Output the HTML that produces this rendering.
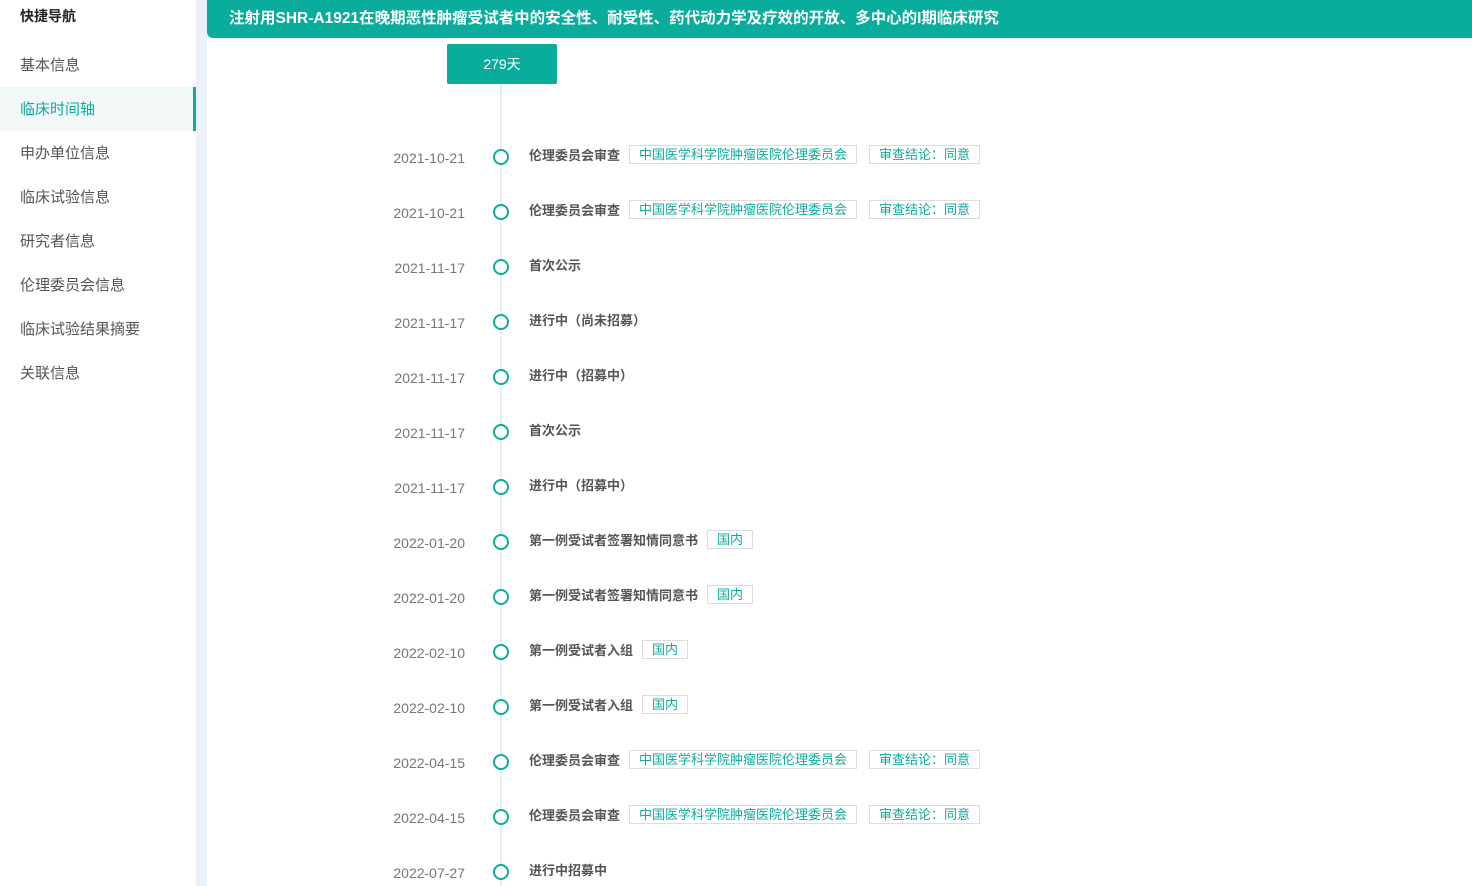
<!DOCTYPE html>
<html><head><meta charset="utf-8"><style>
*{margin:0;padding:0;box-sizing:border-box}
body{width:1472px;height:886px;overflow:hidden;background:#fff;font-family:"Liberation Sans","Noto Sans CJK SC",sans-serif;position:relative}
.side{position:absolute;left:0;top:0;width:196px;height:886px;background:#fff}
.gap{position:absolute;left:196px;top:0;width:11px;height:886px;background:#ebf1f8}
.side .h{position:absolute;left:20px;top:6px;font-size:14px;font-weight:bold;color:#222}
.side .it{position:absolute;left:0;width:196px;height:44px;line-height:45px;padding-left:20px;font-size:15px;color:#555}
.side .act{background:#f2f8f8;color:#0aac9c;border-right:3px solid #0aac9c}
.hdr{position:absolute;left:207px;top:0;width:1265px;height:38px;background:#0aac9c;border-radius:0 0 0 6px;color:#fff;font-weight:bold;font-size:15.5px;line-height:37px;padding-left:22px;white-space:nowrap}
.days{position:absolute;left:447px;top:44px;width:110px;height:40px;background:#0aac9c;color:#fff;font-size:14px;text-align:center;line-height:40px;border-radius:2px}
.line{position:absolute;left:500px;top:84px;width:2px;height:802px;background:#e8edf3}
.row{position:absolute;left:0;height:20px;width:1472px}
.d{position:absolute;right:1007px;top:3px;font-size:14px;color:#777}
.c{position:absolute;left:493px;top:2px;width:16px;height:16px;border:2.5px solid #0aac9c;border-radius:50%;background:#fff}
.t{position:absolute;left:529px;top:-2px;font-size:13px;font-weight:bold;color:#555;white-space:nowrap}
.t span{display:inline-block;font-weight:normal;font-size:13px;color:#0aac9c;border:1px solid #ddd;height:19px;line-height:17px;padding:0 9px;margin-left:9px;vertical-align:1px}
.t span+span{margin-left:12px}
</style></head><body>
<div class="side">
<div class="h">快捷导航</div>
<div class="it" style="top:43px">基本信息</div>
<div class="it act" style="top:87px">临床时间轴</div>
<div class="it" style="top:131px">申办单位信息</div>
<div class="it" style="top:175px">临床试验信息</div>
<div class="it" style="top:219px">研究者信息</div>
<div class="it" style="top:263px">伦理委员会信息</div>
<div class="it" style="top:307px">临床试验结果摘要</div>
<div class="it" style="top:351px">关联信息</div>
</div>
<div class="gap"></div>
<div class="hdr">注射用SHR-A1921在晚期恶性肿瘤受试者中的安全性、耐受性、药代动力学及疗效的开放、多中心的I期临床研究</div>
<div class="days">279天</div>
<div class="line"></div>
<div class="row" style="top:147px"><div class="d">2021-10-21</div><div class="c"></div><div class="t">伦理委员会审查<span>中国医学科学院肿瘤医院伦理委员会</span><span>审查结论：同意</span></div></div>
<div class="row" style="top:202px"><div class="d">2021-10-21</div><div class="c"></div><div class="t">伦理委员会审查<span>中国医学科学院肿瘤医院伦理委员会</span><span>审查结论：同意</span></div></div>
<div class="row" style="top:257px"><div class="d">2021-11-17</div><div class="c"></div><div class="t">首次公示</div></div>
<div class="row" style="top:312px"><div class="d">2021-11-17</div><div class="c"></div><div class="t">进行中（尚未招募）</div></div>
<div class="row" style="top:367px"><div class="d">2021-11-17</div><div class="c"></div><div class="t">进行中（招募中）</div></div>
<div class="row" style="top:422px"><div class="d">2021-11-17</div><div class="c"></div><div class="t">首次公示</div></div>
<div class="row" style="top:477px"><div class="d">2021-11-17</div><div class="c"></div><div class="t">进行中（招募中）</div></div>
<div class="row" style="top:532px"><div class="d">2022-01-20</div><div class="c"></div><div class="t">第一例受试者签署知情同意书<span>国内</span></div></div>
<div class="row" style="top:587px"><div class="d">2022-01-20</div><div class="c"></div><div class="t">第一例受试者签署知情同意书<span>国内</span></div></div>
<div class="row" style="top:642px"><div class="d">2022-02-10</div><div class="c"></div><div class="t">第一例受试者入组<span>国内</span></div></div>
<div class="row" style="top:697px"><div class="d">2022-02-10</div><div class="c"></div><div class="t">第一例受试者入组<span>国内</span></div></div>
<div class="row" style="top:752px"><div class="d">2022-04-15</div><div class="c"></div><div class="t">伦理委员会审查<span>中国医学科学院肿瘤医院伦理委员会</span><span>审查结论：同意</span></div></div>
<div class="row" style="top:807px"><div class="d">2022-04-15</div><div class="c"></div><div class="t">伦理委员会审查<span>中国医学科学院肿瘤医院伦理委员会</span><span>审查结论：同意</span></div></div>
<div class="row" style="top:862px"><div class="d">2022-07-27</div><div class="c"></div><div class="t">进行中招募中</div></div>
</body></html>
